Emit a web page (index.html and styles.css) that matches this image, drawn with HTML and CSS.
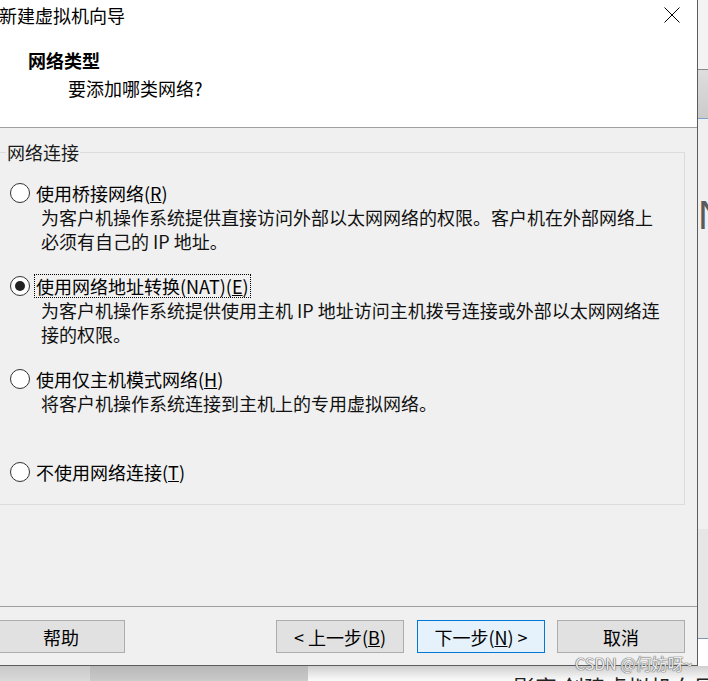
FILE: index.html
```html
<!DOCTYPE html>
<html lang="zh-CN">
<head>
<meta charset="utf-8">
<title>新建虚拟机向导</title>
<link rel="stylesheet" href="styles.css">
</head>
<body>
<div class="screen">
  <div class="top">
    <div class="dialog">
      <div class="head">
        <div class="titlebar">
          <span class="title">新建虚拟机向导</span>
          <svg class="close" width="16" height="16" viewBox="0 0 16 16"><path d="M0.5 0.5 L15.5 15.5 M15.5 0.5 L0.5 15.5" stroke="#000" stroke-width="1" fill="none"/></svg>
        </div>
        <div class="h-title">网络类型</div>
        <div class="h-sub">要添加哪类网络?</div>
      </div>
      <div class="body">
        <div class="group">
          <div class="group-title">网络连接</div>
          <div class="option first">
            <div class="opt-row"><span class="radio"></span><span class="opt-label">使用桥接网络(<u>R</u>)</span></div>
            <div class="desc">为客户机操作系统提供直接访问外部以太网网络的权限。客户机在外部网络上<br>必须有自己的 IP 地址。</div>
          </div>
          <div class="option">
            <div class="opt-row"><span class="radio checked"></span><span class="opt-label focus">使用网络地址转换(NAT)(<u>E</u>)</span></div>
            <div class="desc">为客户机操作系统提供使用主机 IP 地址访问主机拨号连接或外部以太网网络连<br>接的权限。</div>
          </div>
          <div class="option">
            <div class="opt-row"><span class="radio"></span><span class="opt-label">使用仅主机模式网络(<u>H</u>)</span></div>
            <div class="desc">将客户机操作系统连接到主机上的专用虚拟网络。</div>
          </div>
          <div class="option last">
            <div class="opt-row"><span class="radio"></span><span class="opt-label">不使用网络连接(<u>T</u>)</span></div>
          </div>
        </div>
      </div>
      <div class="sep"></div>
      <div class="buttons">
        <button class="btn">帮助</button>
        <div class="btn-group">
          <button class="btn">&lt; 上一步(<u>B</u>)</button>
          <button class="btn default">下一步(<u>N</u>) &gt;</button>
          <button class="btn cancel">取消</button>
        </div>
      </div>
    </div>
    <div class="side">
      <div class="side-a"></div>
      <div class="side-b"></div>
      <div class="side-c"><span class="side-letter">N</span></div>
      <div class="side-d"></div>
      <div class="side-e"></div>
    </div>
  </div>
  <div class="bottom">
    <div class="bot-a"></div>
    <div class="bot-b"></div>
    <div class="bot-c"><span class="bot-text">影客 创建虚拟机向导</span></div>
  </div>
  <div class="watermark">CSDN @何妨呀~</div>
</div>
</body>
</html>
```

FILE: styles.css
```css
* { box-sizing: border-box; }
html, body { margin: 0; padding: 0; }
body {
  width: 708px;
  height: 681px;
  overflow: hidden;
  background: #fff;
  font-family: "Noto Sans CJK SC", "Noto Sans", sans-serif;
  font-size: 18px;
  color: #000;
}
.screen {
  position: relative;
  display: flex;
  flex-direction: column;
  width: 708px;
  height: 681px;
  overflow: hidden;
}
.top { display: flex; height: 666px; flex: none; }
.dialog {
  flex: none;
  width: 702px;
  margin-left: -4px;
  background: #f0f0f0;
  border-right: 1px solid #5c5c5c;
  border-bottom: 1px solid #5c5c5c;
  display: flex;
  flex-direction: column;
}
.head {
  background: #fff;
  border-bottom: 1px solid #a0a0a0;
  padding-bottom: 27px;
}
.titlebar {
  height: 30px;
  display: flex;
  align-items: center;
  justify-content: space-between;
  padding: 0 17px 0 3px;
}
.title { line-height: 24px; }
.close { display: block; }
.h-title {
  margin: 18px 0 0 32px;
  line-height: 24px;
  font-weight: bold;
}
.h-sub {
  margin: 4px 0 0 72px;
  line-height: 24px;
}
.body { padding: 24px 12px 0 2px; }
.group {
  border: 1px solid #dcdcdc;
  height: 353px;
  display: flex;
  flex-direction: column;
  align-items: flex-start;
}
.group-title {
  margin: -13px 0 0 7px;
  padding: 0 1px;
  line-height: 24px;
  background: #f0f0f0;
  color: #1a1a1a;
}
.option { margin-top: 21px; height: 72px; }
.option.first { margin-top: 17px; }
.option.last { height: 24px; }
.opt-row {
  display: flex;
  align-items: center;
  height: 24px;
  padding-left: 11px;
}
.radio {
  width: 20px;
  height: 20px;
  border: 1px solid #333;
  border-radius: 50%;
  background: #fff;
  display: flex;
  align-items: center;
  justify-content: center;
  flex: none;
}
.radio.checked::after {
  content: "";
  width: 10px;
  height: 10px;
  border-radius: 50%;
  background: #222;
}
.opt-label {
  margin-left: 4px;
  padding: 0 1px;
  line-height: 22px;
  border: 1px dotted transparent;
  white-space: nowrap;
}
.opt-label.focus { border-color: #000; }
.desc {
  margin-left: 42px;
  line-height: 24px;
  white-space: nowrap;
  color: #111;
}
.sep {
  margin-top: 101px;
  height: 1px;
  background: #a0a0a0;
}
.buttons {
  display: flex;
  justify-content: space-between;
  margin-top: 13px;
  padding: 0 12px 0 1px;
}
.btn-group { display: flex; gap: 13px; }
.btn {
  width: 128px;
  height: 33px;
  border: 1px solid #adadad;
  background: #e1e1e1;
  font-family: inherit;
  font-size: 18px;
  color: #000;
  padding: 0;
  line-height: 24px;
}
.btn.default { border-color: #0078d7; background: #e5f1fb; }
.btn.cancel { margin-left: -1px; }
.side { width: 10px; flex: none; display: flex; flex-direction: column; }
.side-a { height: 70px; background: #f3f3f3; border-bottom: 1px solid #8a8a8a; }
.side-b { height: 49px; background: linear-gradient(#dedede, #cbcbcb); border-bottom: 1px solid #7aa4cf; }
.side-c { height: 410px; background: #f0f0f0; overflow: hidden; }
.side-letter {
  display: block;
  margin: 76px 0 0 0;
  font-family: "Liberation Sans", sans-serif;
  font-size: 40px;
  line-height: 40px;
  color: #5a5a5a;
}
.side-d { height: 110px; background: #e6e6e6; border-bottom: 1px solid #7d97b4; }
.side-e { flex: 1; background: #fff; }
.bottom { display: flex; flex: 1; }
.bot-a { width: 90px; background: linear-gradient(#c9c9c9, #ececec); }
.bot-b { width: 218px; background: linear-gradient(#b8b8b8 0, #c9c9c9 45%, #f0f0f0 55%, #f0f0f0 100%); }
.bot-c { flex: 1; background: linear-gradient(#cfcfcf 0, #f6f6f6 40%, #fff 55%); overflow: hidden; padding-left: 205px; }
.bot-text {
  display: block;
  margin-top: 8px;
  font-size: 22px;
  line-height: 24px;
  color: #222;
  white-space: nowrap;
}
.watermark {
  position: absolute;
  left: 575px;
  top: 653px;
  font-size: 16px;
  line-height: 20px;
  color: rgba(255, 255, 255, 0.9);
  text-shadow: 0 0 1px #666, 0 0 1px #666, 0 0 1px #666;
  white-space: nowrap;
}
```
